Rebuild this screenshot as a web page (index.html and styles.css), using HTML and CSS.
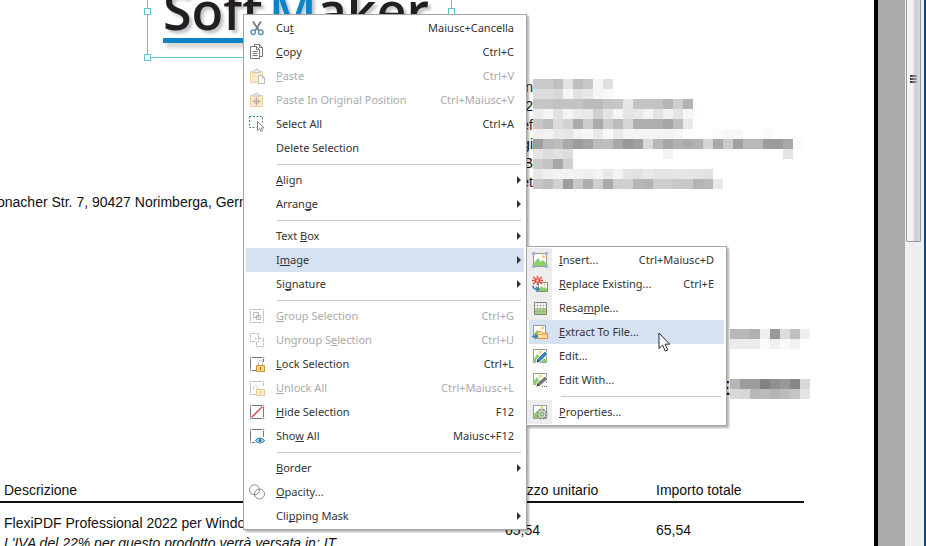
FILE: index.html
```html
<!DOCTYPE html>
<html lang="it">
<head>
<meta charset="utf-8">
<title>FlexiPDF</title>
<link rel="stylesheet" href="styles.css">
</head>
<body>
<div class="window">
  <main class="page">
    <div class="logo">
      <div class="logo-text">Soft<span class="logo-gap"></span><span class="logo-accent">M</span>aker</div>
      <div class="logo-rule"></div>
      <i class="handle handle-left"></i><i class="handle handle-corner"></i><i class="handle handle-right"></i>
    </div>
    <section class="address">
      <div class="address-lines"><div>n</div><div>2</div><div>ef</div><div>gi</div><div>B</div><div>et</div></div>
      <svg class="mosaic" data-rows="cb cb c0 e3 be c8 f6 e0|dd dd d8 f5 e3 e8 f6 f8|c6 c6 c2 c2 c4 bb bb c5 c6 e6 c3 c3 c3 b5 cd b3|ec f6 e2 f4 eb e8 d0 e4 f5 e5 e8 f3 e3 f1 e4 f6 fd|c6 bc dc d2 ab cd aa cd bc d6 af af af a6 bd ea|f0 f2 e8 e6 f3 f6 ea f8 ea f5 f4 f4 f4 f4 f6 ff ff ff fb f8 f8 ff ff fa|9e b8 bd a9 9c a5 bb bd a8 98 a0 da b8 a6 b2 ab b2 d4 a9 ca a0 b8 b8 9c 9c a8 fb|e4 dc e2 dc ff ff ff ff ff ff ff ff ff f4 ff ff ff ff ff ff ff ff ff ff ff e4|cc c4 a8 d0|e8 f0 f3 f3 f2 ee f3 e8 f3 e4 e2 ea e4 e4 e6 e6 e4 e2|c6 bd d0 9e c8 ae ce ab ce d0 b6 b3 cd cd c8 c8 b3 b9 e8"></svg>
    </section>
    <p class="sender">onacher Str. 7, 90427 Norimberga, Germania</p>
    <section class="details">
      <div class="detail"><svg class="mosaic" data-rows="b8 b8 b0 ee 98 dc c0 ee|ec ec ec fb f0 fa f1 ff"></svg></div>
      <div class="detail"><strong>E</strong><svg class="mosaic" data-rows="b6 9c 9c 82 90 98 86 d8|d8 d6 b8 bb b4 bb c4 e4"></svg></div>
    </section>
    <table class="items">
      <colgroup><col class="col-name"><col class="col-price"><col class="col-total"></colgroup>
      <thead><tr><th>Descrizione</th><th>Prezzo unitario</th><th>Importo totale</th></tr></thead>
      <tbody><tr><td>FlexiPDF Professional 2022 per Windows<br><em>L'IVA del 22% per questo prodotto verrà versata in: IT</em></td><td class="num">65,54</td><td class="num">65,54</td></tr></tbody>
    </table>
  </main>
  <div class="backdrop"></div>
  <div class="scrollbar"><div class="thumb"><span></span><span></span><span></span></div></div>
</div>

<ul class="menu context-menu" role="menu">
  <li><button role="menuitem"><span class="icon"><svg viewBox="0 0 16 16"><path d="M4 1.5l5.800 9M12 1.500l-5.800 9" stroke="#777" stroke-width="1.700"/><circle cx="4.200" cy="12.200" r="2.300" stroke="#4390b4" stroke-width="1.300"/><circle cx="11.800" cy="12.200" r="2.300" stroke="#4390b4" stroke-width="1.300"/></svg></span><span class="label">Cu<u>t</u></span><kbd>Maiusc+Cancella</kbd></button></li>
  <li><button role="menuitem"><span class="icon"><svg viewBox="0 0 16 16" stroke="#777"><path d="M5.500 2.500v-2h5l3 3v9H11M10.500 .5v3h3M1.500 2.500h6l3 3v9h-9zM7.500 2.500v3h3M3.500 7.500h5M3.500 9.500h5M3.500 11.500h5"/></svg></span><span class="label"><u>C</u>opy</span><kbd>Ctrl+C</kbd></button></li>
  <li><button role="menuitem" disabled><span class="icon"><svg viewBox="0 0 16 16"><path d="M1.500 3.500h12v11h-12z" fill="#fde9c8" stroke="#efd3a5"/><path d="M4 4.500l1-2h1.500l1-2 1 2H10l1 2z" fill="#eee" stroke="#c4c4c4"/><path d="M9.500 7.500h4l2 2v6h-6zM13 7.500v2.500h2.500" fill="#fff" stroke="#bbb"/></svg></span><span class="label"><u>P</u>aste</span><kbd>Ctrl+V</kbd></button></li>
  <li><button role="menuitem" disabled><span class="icon"><svg viewBox="0 0 16 16"><path d="M1.500 3.500h12v11h-12z" fill="#fde9c8" stroke="#e9cfa5"/><path d="M4 4l1-2h1.500l1-1.500 1 1.500H10l1 2z" fill="#eee" stroke="#c4c4c4"/><path d="M7.500 5.500v8M3.500 9.500h8" stroke="#bba890"/><circle cx="7.500" cy="9.500" r="2.500" stroke="#c8b59a"/></svg></span><span class="label">Paste In Original Position</span><kbd>Ctrl+Maiusc+V</kbd></button></li>
  <li><button role="menuitem"><span class="icon"><svg viewBox="0 0 16 16"><path d="M.5 .5h13v6M.5 .5v11h7" stroke="#417f9e" stroke-dasharray="2 1.500"/><path d="M8.500 5.500v9l2-2 1.500 3 1.500-.7-1.400-2.800h3z" fill="#fff" stroke="#888"/></svg></span><span class="label">Select All</span><kbd>Ctrl+A</kbd></button></li>
  <li><button role="menuitem"><span class="icon"></span><span class="label">Delete Selection</span></button></li>
  <li class="separator" role="separator"></li>
  <li><button role="menuitem" class="has-submenu"><span class="icon"></span><span class="label"><u>A</u>lign</span></button></li>
  <li><button role="menuitem" class="has-submenu"><span class="icon"></span><span class="label">Arran<u>g</u>e</span></button></li>
  <li class="separator" role="separator"></li>
  <li><button role="menuitem" class="has-submenu"><span class="icon"></span><span class="label">Text <u>B</u>ox</span></button></li>
  <li class="submenu-parent"><button role="menuitem" class="has-submenu active" aria-expanded="true"><span class="icon"></span><span class="label">I<u>m</u>age</span></button>
    <ul class="menu submenu" role="menu">
      <li><button role="menuitem"><span class="icon gutter"><svg viewBox="0 0 16 16"><path d="M1.500 1.500h13v13h-13z" fill="#fff" stroke="#999"/><path d="M2 14v-3l4-5 3 4 2-2 3 3v3z" fill="#8ccf63"/><circle cx="11.500" cy="4.500" r="1.500" fill="#f5cf68"/><path d="M0 0h3v3H0zM13 0h3v3h-3zM0 13h3v3H0zM13 13h3v3h-3z" fill="#9bb8e0"/></svg></span><span class="label"><u>I</u>nsert...</span><kbd>Ctrl+Maiusc+D</kbd></button></li>
      <li><button role="menuitem"><span class="icon gutter"><svg viewBox="0 0 16 16"><path d="M6.500 6.500h9v9h-9z" fill="#fff" stroke="#888"/><path d="M7 15v-2l2.500-3 2 2 1.500-1 2 2v2z" fill="#8ccf63"/><circle cx="12.500" cy="8.500" r="1" fill="#eebb45"/><path d="M5.500 0v9M1 1l9 7M1 8l9-7M0 4.500h11" stroke="#e34c43" stroke-width="1.500"/><circle cx="5.500" cy="4.500" r="1.500" fill="#fff" stroke="#e34c43"/><path d="M1 9.500c0 3 1.500 4 5 4M4 11l3 2.500L4 16" stroke="#3a82ad" stroke-width="1.500"/></svg></span><span class="label"><u>R</u>eplace Existing...</span><kbd>Ctrl+E</kbd></button></li>
      <li><button role="menuitem"><span class="icon gutter"><svg viewBox="0 0 16 16"><path d="M2.500 2.500h12v12h-12z" fill="#fff"/><path d="M3 14V9l3-1 3 1 5-1v6z" fill="#a5d980"/><path d="M5.500 3v11M8.500 3v11M11.500 3v11M3 5.500h11M3 8.500h11M3 11.500h11" stroke="#999" stroke-opacity=".5"/><path d="M2.500 2.500h12v12h-12z" stroke="#808080"/></svg></span><span class="label">Resa<u>m</u>ple...</span></button></li>
      <li><button role="menuitem" class="active"><span class="icon gutter-plain"><svg viewBox="0 0 16 16"><path d="M1.500 1.500h12v12h-12z" fill="#fff" stroke="#999"/><path d="M2 13v-3l3-4 3 3v4z" fill="#8ccf63"/><circle cx="10.500" cy="4" r="1.300" fill="#f0c040"/><path d="M5.500 14.500v-7h3l1 1.500h6v5.500z" fill="#ffdf9b" stroke="#d89434"/><path d="M6 10.500h9" stroke="#e7ad58"/><path d="M0 12.500h5M3 10l2.500 2.500L3 15" stroke="#3a82ad" stroke-width="1.300"/></svg></span><span class="label"><u>E</u>xtract To File...</span></button></li>
      <li><button role="menuitem"><span class="icon gutter-plain"><svg viewBox="0 0 16 16"><path d="M1.500 1.500h13v13h-13z" fill="#fff" stroke="#999"/><path d="M2 14v-3l3-5 4 4 5 1v3z" fill="#8ccf63"/><circle cx="8.500" cy="4" r="1.500" fill="#f5cf68"/><path d="M4 15l1-4 8-8 3 3-8 8z" fill="#3b86b5" stroke="#fff"/><path d="M4.500 14.500l1-3 2 2z" fill="#245"/></svg></span><span class="label">Edit...</span></button></li>
      <li><button role="menuitem"><span class="icon gutter-plain"><svg viewBox="0 0 16 16"><path d="M1.500 13V1.500h13V11" fill="#fff" stroke="#999"/><path d="M1 13v-3l4-5 3 5-4 3z" fill="#8ccf63"/><circle cx="8.500" cy="4" r="1.500" fill="#f5cf68"/><path d="M4 15l1-4 8-7 3 3-8 7z" fill="#777" stroke="#fff"/><path d="M4.500 14.500l1-3 2 2z" fill="#333"/><path d="M10 14.500h6" stroke="#666" stroke-dasharray="1 1"/></svg></span><span class="label">Edit With...</span></button></li>
      <li class="separator" role="separator"></li>
      <li><button role="menuitem"><span class="icon gutter"><svg viewBox="0 0 16 16"><path d="M1.500 1.500h13v13h-13z" fill="#fff" stroke="#999"/><path d="M2 14v-4l4-4 8 5v3z" fill="#8ccf63"/><circle cx="10" cy="3.500" r="1.300" fill="#f5cf68"/><circle cx="10" cy="10" r="4.500" fill="#cfe5c4" stroke="#8a938a" stroke-width="2" stroke-dasharray="2.500 1"/><circle cx="10" cy="10" r="2" fill="#b5dc9c" stroke="#8a938a"/></svg></span><span class="label"><u>P</u>roperties...</span></button></li>
    </ul>
  </li>
  <li><button role="menuitem" class="has-submenu"><span class="icon"></span><span class="label">Si<u>g</u>nature</span></button></li>
  <li class="separator" role="separator"></li>
  <li><button role="menuitem" disabled><span class="icon"><svg viewBox="0 0 16 16"><path d="M3 1.500h10M3 14.500h10M1.500 3v10M14.500 3v10" stroke="#c4c4c4"/><path d="M4.500 4.500h5v5h-5zM7.500 7.500h4v4h-4z" stroke="#b5b5b5"/><path d="M1 1h1v1H1zM14 1h1v1h-1zM1 14h1v1H1zM14 14h1v1h-1z" fill="#a9c3e3" stroke="#bdd1ea"/></svg></span><span class="label"><u>G</u>roup Selection</span><kbd>Ctrl+G</kbd></button></li>
  <li><button role="menuitem" disabled><span class="icon"><svg viewBox="0 0 16 16"><path d="M3 1.500h5M1.500 3v5M3 9.500h3M9.500 3v3M7.500 14.500h6M14.500 7v6M7.500 10v3M9 6.500h4" stroke="#bbb" stroke-dasharray="3 1"/><path d="M1 1h1v1H1zM9 1h1v1H9zM1 9h1v1H1zM6 6h1v1H6zM14 6h1v1h-1zM14 14h1v1h-1zM7 14h1v1H7zM9 9h1v1H9z" fill="#c9d9ee" stroke="#bdd1ea"/></svg></span><span class="label">Ungroup S<u>e</u>lection</span><kbd>Ctrl+U</kbd></button></li>
  <li><button role="menuitem"><span class="icon"><svg viewBox="0 0 16 16"><path d="M3 1.500h10M3 14.500h4M1.500 3v10M14.500 3v3" stroke="#777"/><path d="M1 1h1v1H1zM14 1h1v1h-1zM1 14h1v1H1z" fill="#6b9ad0" stroke="#94b5dd"/><path d="M9.500 9V6.500c0-3 4-3 4 0V9" stroke="#bbb"/><path d="M7.500 9.500h8v6h-8z" fill="#f8d47e" stroke="#cb9431"/><path d="M11.500 11v3" stroke="#a16c17"/></svg></span><span class="label"><u>L</u>ock Selection</span><kbd>Ctrl+L</kbd></button></li>
  <li><button role="menuitem" disabled><span class="icon"><svg viewBox="0 0 16 16"><path d="M3 1.500h10M3 14.500h4M1.500 3v10M14.500 3v3" stroke="#c4c4c4"/><path d="M1 1h1v1H1zM14 1h1v1h-1zM1 14h1v1H1z" fill="#a9c3e3" stroke="#bdd1ea"/><path d="M4.500 10V7.500c0-3 4-3 4 0V9" stroke="#ccc"/><path d="M7.500 9.500h8v6h-8z" fill="#fdeecb" stroke="#e9c98f"/><path d="M11.500 11v3" stroke="#d8b67c"/></svg></span><span class="label"><u>U</u>nlock All</span><kbd>Ctrl+Maiusc+L</kbd></button></li>
  <li><button role="menuitem"><span class="icon"><svg viewBox="0 0 16 16"><path d="M3 1.500h10M3 14.500h10M1.500 3v10M14.500 3v10" stroke="#777"/><path d="M2.500 13.500l11-11" stroke="#d84040" stroke-width="1.300"/><path d="M1 1h1v1H1zM14 1h1v1h-1zM1 14h1v1H1zM14 14h1v1h-1z" fill="#6b9ad0" stroke="#94b5dd"/></svg></span><span class="label"><u>H</u>ide Selection</span><kbd>F12</kbd></button></li>
  <li><button role="menuitem"><span class="icon"><svg viewBox="0 0 16 16"><path d="M3 1.500h10M3 14.500h3M1.500 3v10M14.500 3v6" stroke="#777"/><path d="M1 1h1v1H1zM14 1h1v1h-1zM1 14h1v1H1z" fill="#6b9ad0" stroke="#94b5dd"/><path d="M6.500 12.500c2.500-3.300 6.500-3.300 9 0-2.500 3.300-6.500 3.300-9 0z" fill="#c9e3f3" stroke="#3a86b4" stroke-width="1.200"/><circle cx="11" cy="12.500" r="1.500" fill="#2b76a5"/></svg></span><span class="label">Sho<u>w</u> All</span><kbd>Maiusc+F12</kbd></button></li>
  <li class="separator" role="separator"></li>
  <li><button role="menuitem" class="has-submenu"><span class="icon"></span><span class="label"><u>B</u>order</span></button></li>
  <li><button role="menuitem"><span class="icon"><svg viewBox="0 0 16 16" stroke="#8a8a8a"><circle cx="5.500" cy="5.800" r="5"/><circle cx="10.500" cy="10" r="5"/></svg></span><span class="label"><u>O</u>pacity...</span></button></li>
  <li><button role="menuitem" class="has-submenu"><span class="icon"></span><span class="label">Cli<u>p</u>ping Mask</span></button></li>
</ul>
<svg class="cursor" viewBox="0 0 12 20"><path d="M1 1v15.500l3.600-3.400 2.700 6 2.500-1.100-2.700-5.800h4.600z" fill="#fff" stroke="#223" stroke-linejoin="round"/></svg>
<script src="script.js"></script>
</body>
</html>
```
FILE: styles.css
```css
* { box-sizing: border-box; }
html, body { height: 100%; margin: 0; }
body {
  position: relative;
  overflow: hidden;
  background: #fff;
  color: #111;
  font: 14px/19px "Liberation Sans", Arial, sans-serif;
}
.window { display: flex; height: 100%; border-right: 2px solid #0c4584; }

/* Document page */
.page { flex: 1; min-width: 0; height: 100%; overflow: hidden; border-right: 4px solid #000; }
.logo {
  position: relative;
  width: 305px;
  height: 58px;
  margin-left: 147px;
  padding-left: 15px;
  border: solid #63c3cf;
  border-width: 0 1px 1px;
}
.logo-text {
  height: 38px;
  display: flex;
  align-items: flex-start;
  font: 600 52px/20px "Open Sans", sans-serif;
  color: #231f20;
  text-shadow: 3px 3px 3px #c4c4cc;
  white-space: nowrap;
}
.logo-gap { width: 6px; }
.logo-accent { color: #0a84c6; }
.logo-rule { width: 270px; height: 5px; background: #0a84c6; box-shadow: 3px 4px 4px #ccc; }
.handle { position: absolute; width: 7px; height: 7px; border: 1px solid #63c3cf; background: #fff; }
.handle-left { left: -4px; top: 8px; }
.handle-right { right: -4px; top: 8px; }
.handle-corner { left: -4px; bottom: -4px; }

.address { display: flex; margin-top: 20px; }
.address-lines { width: 533px; text-align: right; }
.mosaic { display: block; margin-top: 1px; shape-rendering: crispEdges; }
.sender { margin: 1px 0 0 -3px; white-space: nowrap; }
.details { padding: 116px 0 0 710px; }
.detail { display: flex; height: 50px; }
.detail strong { width: 20px; font-size: 21px; text-align: right; }
.detail .mosaic { margin-left: auto; margin-right: 64px; }

.items { width: 804px; table-layout: fixed; border-collapse: collapse; margin-top: 53px; }
.col-name { width: 505px; }
.col-price { width: 151px; }
.items th { padding: 0 0 1px; text-align: left; font-weight: normal; border-bottom: 2px solid #111; }
.items td { padding: 11px 0 0; vertical-align: top; white-space: nowrap; }
.items td em { line-height: 21px; }
.items th:first-child, .items td:first-child { padding-left: 4px; }
.items .num { padding-top: 18px; }

.backdrop { width: 27px; background: #aaa; }
.scrollbar { width: 19px; background: #efeff0; padding: 0 3px 0 1px; }
.thumb {
  height: 242px;
  padding: 75px 3px 0;
  border: 1px solid #98989c;
  border-top: 0;
  border-radius: 0 0 2px 2px;
  background: linear-gradient(90deg, #f5f5f5 0 40%, #cfcfd3 65%, #dadadd);
}
.thumb span { display: block; width: 7px; height: 2px; margin-bottom: 1px; background: linear-gradient(90deg, #333, #aaa); }

/* Menus */
.menu {
  position: absolute;
  z-index: 1;
  margin: 0;
  padding: 1px 2px;
  list-style: none;
  border: 1px solid #a5a5a5;
  background: #fff;
  box-shadow: 2px 2px 2px rgba(0, 0, 0, .3);
  font: 11px/24px "Noto Sans", "Segoe UI", sans-serif;
}
.context-menu { left: 243px; top: 14px; width: 284px; }
.submenu-parent { position: relative; }
.submenu { left: calc(100% + 2px); top: -2px; width: 201px; }
.menu button {
  position: relative;
  display: flex;
  align-items: center;
  width: 100%;
  height: 24px;
  padding: 0 10px 0 0;
  border: 0;
  background: none;
  color: #333;
  font: inherit;
  text-align: left;
}
.menu button:disabled { color: #aaa; }
.menu button.active { background: #d6e2f2; }
.menu .label { flex: 1; white-space: nowrap; }
.menu kbd { font: inherit; }
.menu u { text-underline-offset: 1px; text-decoration-thickness: 1px; text-decoration-skip-ink: none; }
.icon { display: flex; align-items: center; width: 30px; height: 24px; padding-left: 3px; }
.icon svg { width: 16px; height: 16px; fill: none; }
.icon.gutter { width: 25px; margin: 0 7px 0 -2px; padding-left: 5px; background: #ededed; }
.has-submenu::after {
  content: "";
  position: absolute;
  right: 3px;
  top: 8px;
  border: solid transparent;
  border-width: 4px 0 4px 4px;
  border-left-color: #333;
}
.separator { height: 8px; padding: 4px 3px 0 32px; }
.separator::before { content: ""; display: block; height: 1px; background: #c8c8c8; }
.cursor { position: absolute; z-index: 2; left: 658px; top: 332px; width: 12px; height: 20px; }
```
FILE: script.js
```js
// Fills each mosaic with 10px grey cells from its rows of hex levels.
document.querySelectorAll('.mosaic').forEach(function (svg) {
  var rows = svg.dataset.rows.split('|').map(function (r) { return r.split(' '); });
  var cols = Math.max.apply(null, rows.map(function (r) { return r.length; }));
  svg.setAttribute('width', cols * 10);
  svg.setAttribute('height', rows.length * 10);
  rows.forEach(function (row, y) {
    row.forEach(function (v, x) {
      var cell = document.createElementNS('http://www.w3.org/2000/svg', 'rect');
      cell.setAttribute('x', x * 10);
      cell.setAttribute('y', y * 10);
      cell.setAttribute('width', 10);
      cell.setAttribute('height', 10);
      cell.setAttribute('fill', '#' + v + v + v);
      svg.appendChild(cell);
    });
  });
});
```
